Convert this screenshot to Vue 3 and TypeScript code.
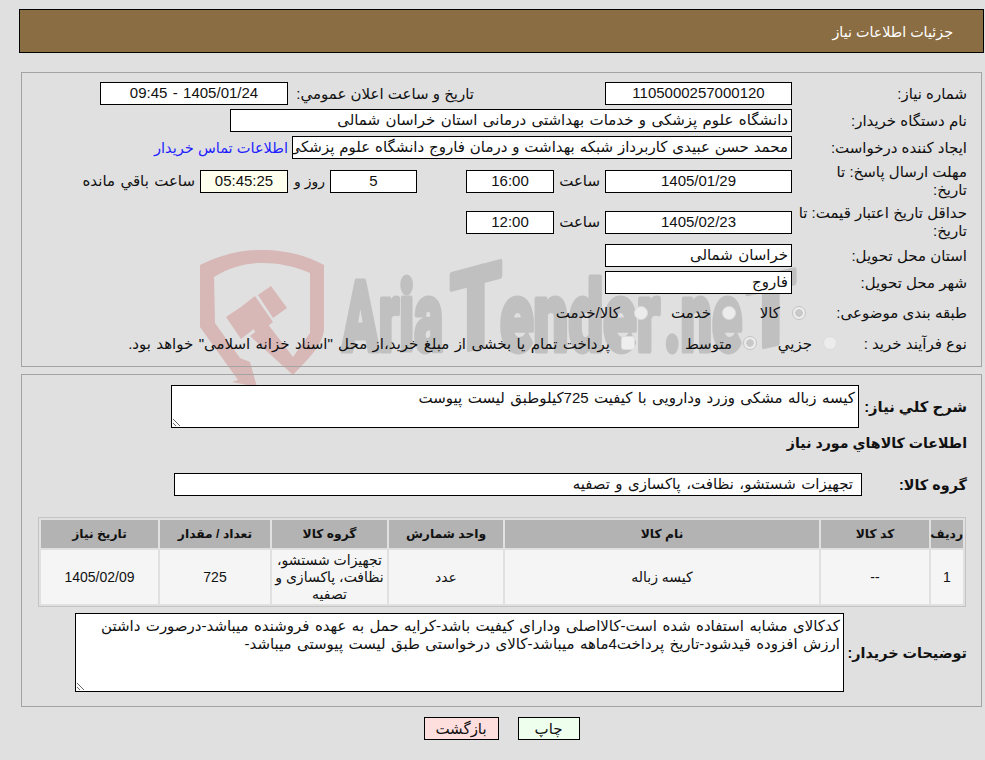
<script setup lang="ts">
interface ItemRow {
  index: string
  code: string
  name: string
  unit: string
  group: string
  qty: string
  date: string
}
const columns: string[] = ['ردیف', 'کد کالا', 'نام کالا', 'واحد شمارش', 'گروه کالا', 'تعداد / مقدار', 'تاریخ نیاز']
const rows: ItemRow[] = [
  {
    index: '1',
    code: '--',
    name: 'کیسه زباله',
    unit: 'عدد',
    group: 'تجهیزات شستشو، نظافت، پاکسازی و تصفیه',
    qty: '725',
    date: '1405/02/09'
  }
]
const summary = 'کیسه زباله مشکی وزرد ودارویی با کیفیت 725کیلوطبق لیست پیوست'
const notes =
  'کدکالای مشابه استفاده شده است-کالااصلی ودارای کیفیت باشد-کرایه حمل به عهده فروشنده میباشد-درصورت داشتن ارزش افزوده قیدشود-تاریخ پرداخت4ماهه میباشد-کالای درخواستی طبق لیست پیوستی میباشد-'
</script>

<template>
  <div class="page" dir="rtl">
    <svg class="watermark" viewBox="0 0 985 760" width="985" height="760" aria-hidden="true">
      <g fill="#d8b7b7">
        <path fill-rule="evenodd" d="M200 265C222 254 242 250 262 250C282 250 304 254 324 265L324 330C322 345 312 355 293 375L250 336L267 323L293 357L310 333L310 273C294 266 278 263 262 263C246 263 230 267 214 277L215 323L240 358L250 362L257 387L232 382L238 380L200 327Z" />
        <path d="M226 317L241 307L255 328L241 339Z" />
        <path d="M241 307L255 296L273 322L257 335Z" />
        <path d="M258 295L271 286L287 308L273 318Z" />
      </g>
      <g class="wm-text" fill="#c0c0c0" stroke="#c0c0c0" stroke-width="5" stroke-linejoin="round">
        <text x="342" y="351" textLength="101" lengthAdjust="spacingAndGlyphs">Aria</text>
        <text x="450" y="351" class="wm-t" transform="translate(0 124) skewY(-15)" textLength="52" lengthAdjust="spacingAndGlyphs">T</text>
        <text x="500" y="351" textLength="160" lengthAdjust="spacingAndGlyphs">ender</text>
        <text x="664" y="351" textLength="78" lengthAdjust="spacingAndGlyphs">.ne</text>
        <text x="746" y="351" transform="translate(0 172) skewY(-13)" textLength="50" lengthAdjust="spacingAndGlyphs">T</text>
      </g>
    </svg>

    <div class="content">
      <header class="title">جزئیات اطلاعات نیاز</header>

      <section class="panel panel-top">
        <div class="row">
          <label class="lbl">شماره نیاز:</label>
          <div class="box w187 center">1105000257000120</div>
          <span class="txt announce">تاریخ و ساعت اعلان عمومي:</span>
          <div class="box w188 center">1405/01/24 - 09:45</div>
        </div>
        <div class="row mt4">
          <label class="lbl">نام دستگاه خریدار:</label>
          <div class="box buyer">دانشگاه علوم پزشکی و خدمات بهداشتی درمانی استان خراسان شمالی</div>
        </div>
        <div class="row mt4">
          <label class="lbl">ایجاد کننده درخواست:</label>
          <div class="box creator">محمد حسن عبیدی کاربرداز شبکه بهداشت و درمان فاروج دانشگاه علوم پزشکی</div>
          <a class="contact" href="#">اطلاعات تماس خریدار</a>
        </div>
        <div class="row mt4">
          <label class="lbl">مهلت ارسال پاسخ: تا<br />تاریخ:</label>
          <div class="box w187 center">1405/01/29</div>
          <span class="txt hour">ساعت</span>
          <div class="box w88 center">16:00</div>
          <div class="box w87 center days">5</div>
          <span class="txt day">روز و</span>
          <div class="box w88 center timer">05:45:25</div>
          <span class="txt left">ساعت باقي مانده</span>
        </div>
        <div class="row mt5">
          <label class="lbl">حداقل تاریخ اعتبار قیمت: تا<br />تاریخ:</label>
          <div class="box w187 center">1405/02/23</div>
          <span class="txt hour">ساعت</span>
          <div class="box w88 center">12:00</div>
        </div>
        <div class="row mt4">
          <label class="lbl">استان محل تحویل:</label>
          <div class="box w187">خراسان شمالی</div>
        </div>
        <div class="row mt4">
          <label class="lbl">شهر محل تحویل:</label>
          <div class="box w187">فاروج</div>
        </div>
        <div class="row opts first-opts">
          <label class="lbl">طبقه بندی موضوعی:</label>
          <input class="radio r-kala" type="radio" name="cat" checked />
          <span class="txt t-kala">کالا</span>
          <input class="radio r-service" type="radio" name="cat" />
          <span class="txt t-service">خدمت</span>
          <input class="radio r-both" type="radio" name="cat" />
          <span class="txt">کالا/خدمت</span>
        </div>
        <div class="row opts second-opts">
          <label class="lbl">نوع فرآیند خرید :</label>
          <input class="radio r-small" type="radio" name="proc" />
          <span class="txt t-small">جزیي</span>
          <input class="radio r-mid" type="radio" name="proc" checked />
          <span class="txt t-mid">متوسط</span>
          <span class="square"></span>
          <span class="txt">پرداخت تمام یا بخشی از مبلغ خرید،از محل "اسناد خزانه اسلامی" خواهد بود.</span>
        </div>
      </section>

      <section class="panel panel-bottom">
        <div class="row">
          <label class="lbl-b summary-lbl">شرح کلي نیاز:</label>
          <textarea class="area summary" readonly :value="summary"></textarea>
        </div>
        <h2 class="heading">اطلاعات کالاهاي مورد نیاز</h2>
        <div class="row group-row">
          <label class="lbl-b group-lbl">گروه کالا:</label>
          <div class="box group-box">تجهیزات شستشو، نظافت، پاکسازی و تصفیه</div>
        </div>
        <table class="items">
          <colgroup>
            <col class="c1" /><col class="c2" /><col class="c3" /><col class="c4" /><col class="c5" /><col class="c6" /><col class="c7" />
          </colgroup>
          <thead>
            <tr>
              <th v-for="c in columns" :key="c">{{ c }}</th>
            </tr>
          </thead>
          <tbody>
            <tr v-for="r in rows" :key="r.index">
              <td>{{ r.index }}</td>
              <td>{{ r.code }}</td>
              <td>{{ r.name }}</td>
              <td>{{ r.unit }}</td>
              <td class="wrap">{{ r.group }}</td>
              <td>{{ r.qty }}</td>
              <td>{{ r.date }}</td>
            </tr>
          </tbody>
        </table>
        <div class="row notes-row">
          <label class="lbl-b notes-lbl">توضیحات خریدار:</label>
          <textarea class="area notes" readonly :value="notes"></textarea>
        </div>
      </section>

      <div class="actions">
        <button class="btn print" type="button">چاپ</button>
        <button class="btn back" type="button">بازگشت</button>
      </div>
    </div>
  </div>
</template>

<style>
html,
body {
  margin: 0;
  background: #e0e0e0;
}
</style>

<style scoped>
.page {
  position: relative;
  width: 985px;
  height: 760px;
  overflow: hidden;
  background: #e0e0e0;
  color: #111;
  font-family: "Liberation Sans", "DejaVu Sans", sans-serif;
  font-size: 15px;
  line-height: 18px;
  word-spacing: 1.2px;
}
.watermark {
  position: absolute;
  left: 0;
  top: 0;
  z-index: 0;
  direction: ltr;
}
.wm-text {
  font-family: Roboto, sans-serif;
  font-weight: 900;
  font-size: 98px;
  direction: ltr;
  word-spacing: 0;
}
.wm-t {
  font-size: 112px;
}
.content {
  position: relative;
  z-index: 1;
  padding: 9px 1px 0 19px;
}
.title {
  height: 42px;
  border: 1px solid #000;
  background: #8b6d43;
  color: #fff;
  font-size: 14.3px;
  line-height: 44px;
  padding-right: 30px;
  word-spacing: 0;
}
.panel {
  margin-left: 2px;
  margin-right: 2px;
  border: 1px solid #a3a3a3;
  box-sizing: border-box;
  padding-right: 14px;
}
.panel-top {
  margin-top: 19px;
  height: 295px;
  padding-top: 9px;
}
.panel-bottom {
  margin-top: 7px;
  height: 333px;
  padding-top: 10px;
}
.row {
  display: flex;
  align-items: center;
}
.mt4 {
  margin-top: 4px;
}
.mt5 {
  margin-top: 5px;
}
.lbl {
  flex: none;
  width: 172px;
  margin-left: 3px;
  word-spacing: 0;
}
.box {
  flex: none;
  box-sizing: border-box;
  height: 23px;
  border: 1px solid #000;
  background: #fff;
  line-height: 20px;
  padding: 0 3px;
  white-space: nowrap;
  overflow: hidden;
}
.center {
  text-align: center;
}
.w187 {
  width: 187px;
}
.w188 {
  width: 188px;
}
.w88 {
  width: 88px;
}
.w87 {
  width: 87px;
}
.buyer {
  width: 562px;
}
.creator {
  width: 500px;
  word-spacing: 0.7px;
}
.announce {
  width: 186px;
  margin-right: 131px;
  word-spacing: 0;
}
.txt {
  flex: none;
  white-space: nowrap;
}
.contact {
  margin-right: 4px;
  color: #1f1fff;
  text-decoration: none;
  white-space: nowrap;
  font-size: 14.6px;
  word-spacing: 0;
}
.hour {
  width: 51px;
  padding-right: 5px;
  box-sizing: border-box;
}
.days {
  margin-right: 49px;
}
.day {
  width: 42px;
  padding-right: 5px;
  box-sizing: border-box;
  font-size: 14px;
  word-spacing: 0;
}
.timer {
  background: #ffffee;
}
.left {
  margin-right: 5px;
}
.opts {
  height: 18px;
}
.first-opts {
  margin-top: 10px;
}
.second-opts {
  margin-top: 13px;
}
.radio {
  appearance: none;
  flex: none;
  box-sizing: border-box;
  width: 14px;
  height: 14px;
  margin: 0;
  border-radius: 50%;
  border: 1px solid #dcdcdc;
  background: #ececec;
}
.radio:checked {
  background: radial-gradient(circle, #c8c8c8 0 3.5px, #ececec 4px);
  border-color: #c4c4c4;
}
.second-opts .radio,
.second-opts .square {
  margin-bottom: 3px;
}
.r-kala {
  margin-left: 12px;
  margin-right: -14px;
}
.t-kala {
  width: 44px;
}
.r-service {
  margin-left: 11px;
}
.t-service {
  width: 63px;
}
.r-both {
  margin-left: 14px;
}
.r-small {
  margin-left: 11px;
  margin-right: -45px;
}
.t-small {
  width: 55px;
}
.r-mid {
  margin-left: 11px;
}
.t-mid {
  width: 97px;
}
.square {
  flex: none;
  width: 14px;
  height: 14px;
  border-radius: 3px;
  background: #eeeeee;
  border: 1px solid #dddddd;
  box-sizing: border-box;
  margin-left: 11px;
}
.lbl-b {
  flex: none;
  font-weight: 700;
  font-size: 14.4px;
  white-space: nowrap;
  word-spacing: 0;
}
.summary-lbl {
  width: 103px;
  margin-left: 5px;
  font-size: 14.8px;
}
.area {
  flex: none;
  box-sizing: border-box;
  border: 1px solid #000;
  background: #fff;
  color: #111;
  font: inherit;
  word-spacing: inherit;
  padding: 3px 3px;
  margin: 0;
  resize: both;
  overflow: hidden;
  display: block;
  outline: none;
}
.summary {
  width: 688px;
  height: 43px;
}
.heading {
  margin: 6px 0 0;
  height: 18px;
  font-size: 14.2px;
  line-height: 18px;
  font-weight: 700;
  word-spacing: 0;
}
.group-row {
  margin-top: 21px;
}
.group-lbl {
  width: 105px;
}
.group-box {
  width: 688px;
  padding-right: 8px;
}
.items {
  margin-top: 21px;
  margin-right: 1px;
  width: 928px;
  table-layout: fixed;
  border-collapse: separate;
  border-spacing: 2px;
  border: 1px solid #c4c4c4;
  box-sizing: border-box;
  font-size: 14px;
  word-spacing: 0;
}
.c1 { width: 32px; }
.c2 { width: 108px; }
.c3 { width: 314px; }
.c4 { width: 114px; }
.c5 { width: 115px; }
.c6 { width: 110px; }
.c7 { width: 117px; }
.items th {
  height: 28px;
  padding: 0;
  background: #b3b3b3;
  font-size: 12.3px;
  font-weight: 700;
  text-align: center;
}
.items td {
  height: 54px;
  padding: 0;
  background: #f5f5f5;
  text-align: center;
}
.items td.wrap {
  line-height: 17px;
}
.notes-row {
  margin-top: 6px;
}
.notes-lbl {
  width: 118px;
  margin-left: 5px;
}
.notes {
  width: 769px;
  height: 79px;
  padding: 3px 3px;
  line-height: 18px;
}
.actions {
  display: flex;
  justify-content: center;
  gap: 19px;
  margin-top: 10px;
}
.btn {
  box-sizing: border-box;
  height: 23px;
  border: 1px solid #000;
  padding: 0;
  font: inherit;
  color: #111;
}
.print {
  width: 62px;
  background: #eeffee;
}
.back {
  width: 75px;
  background: #ffdede;
}
</style>
